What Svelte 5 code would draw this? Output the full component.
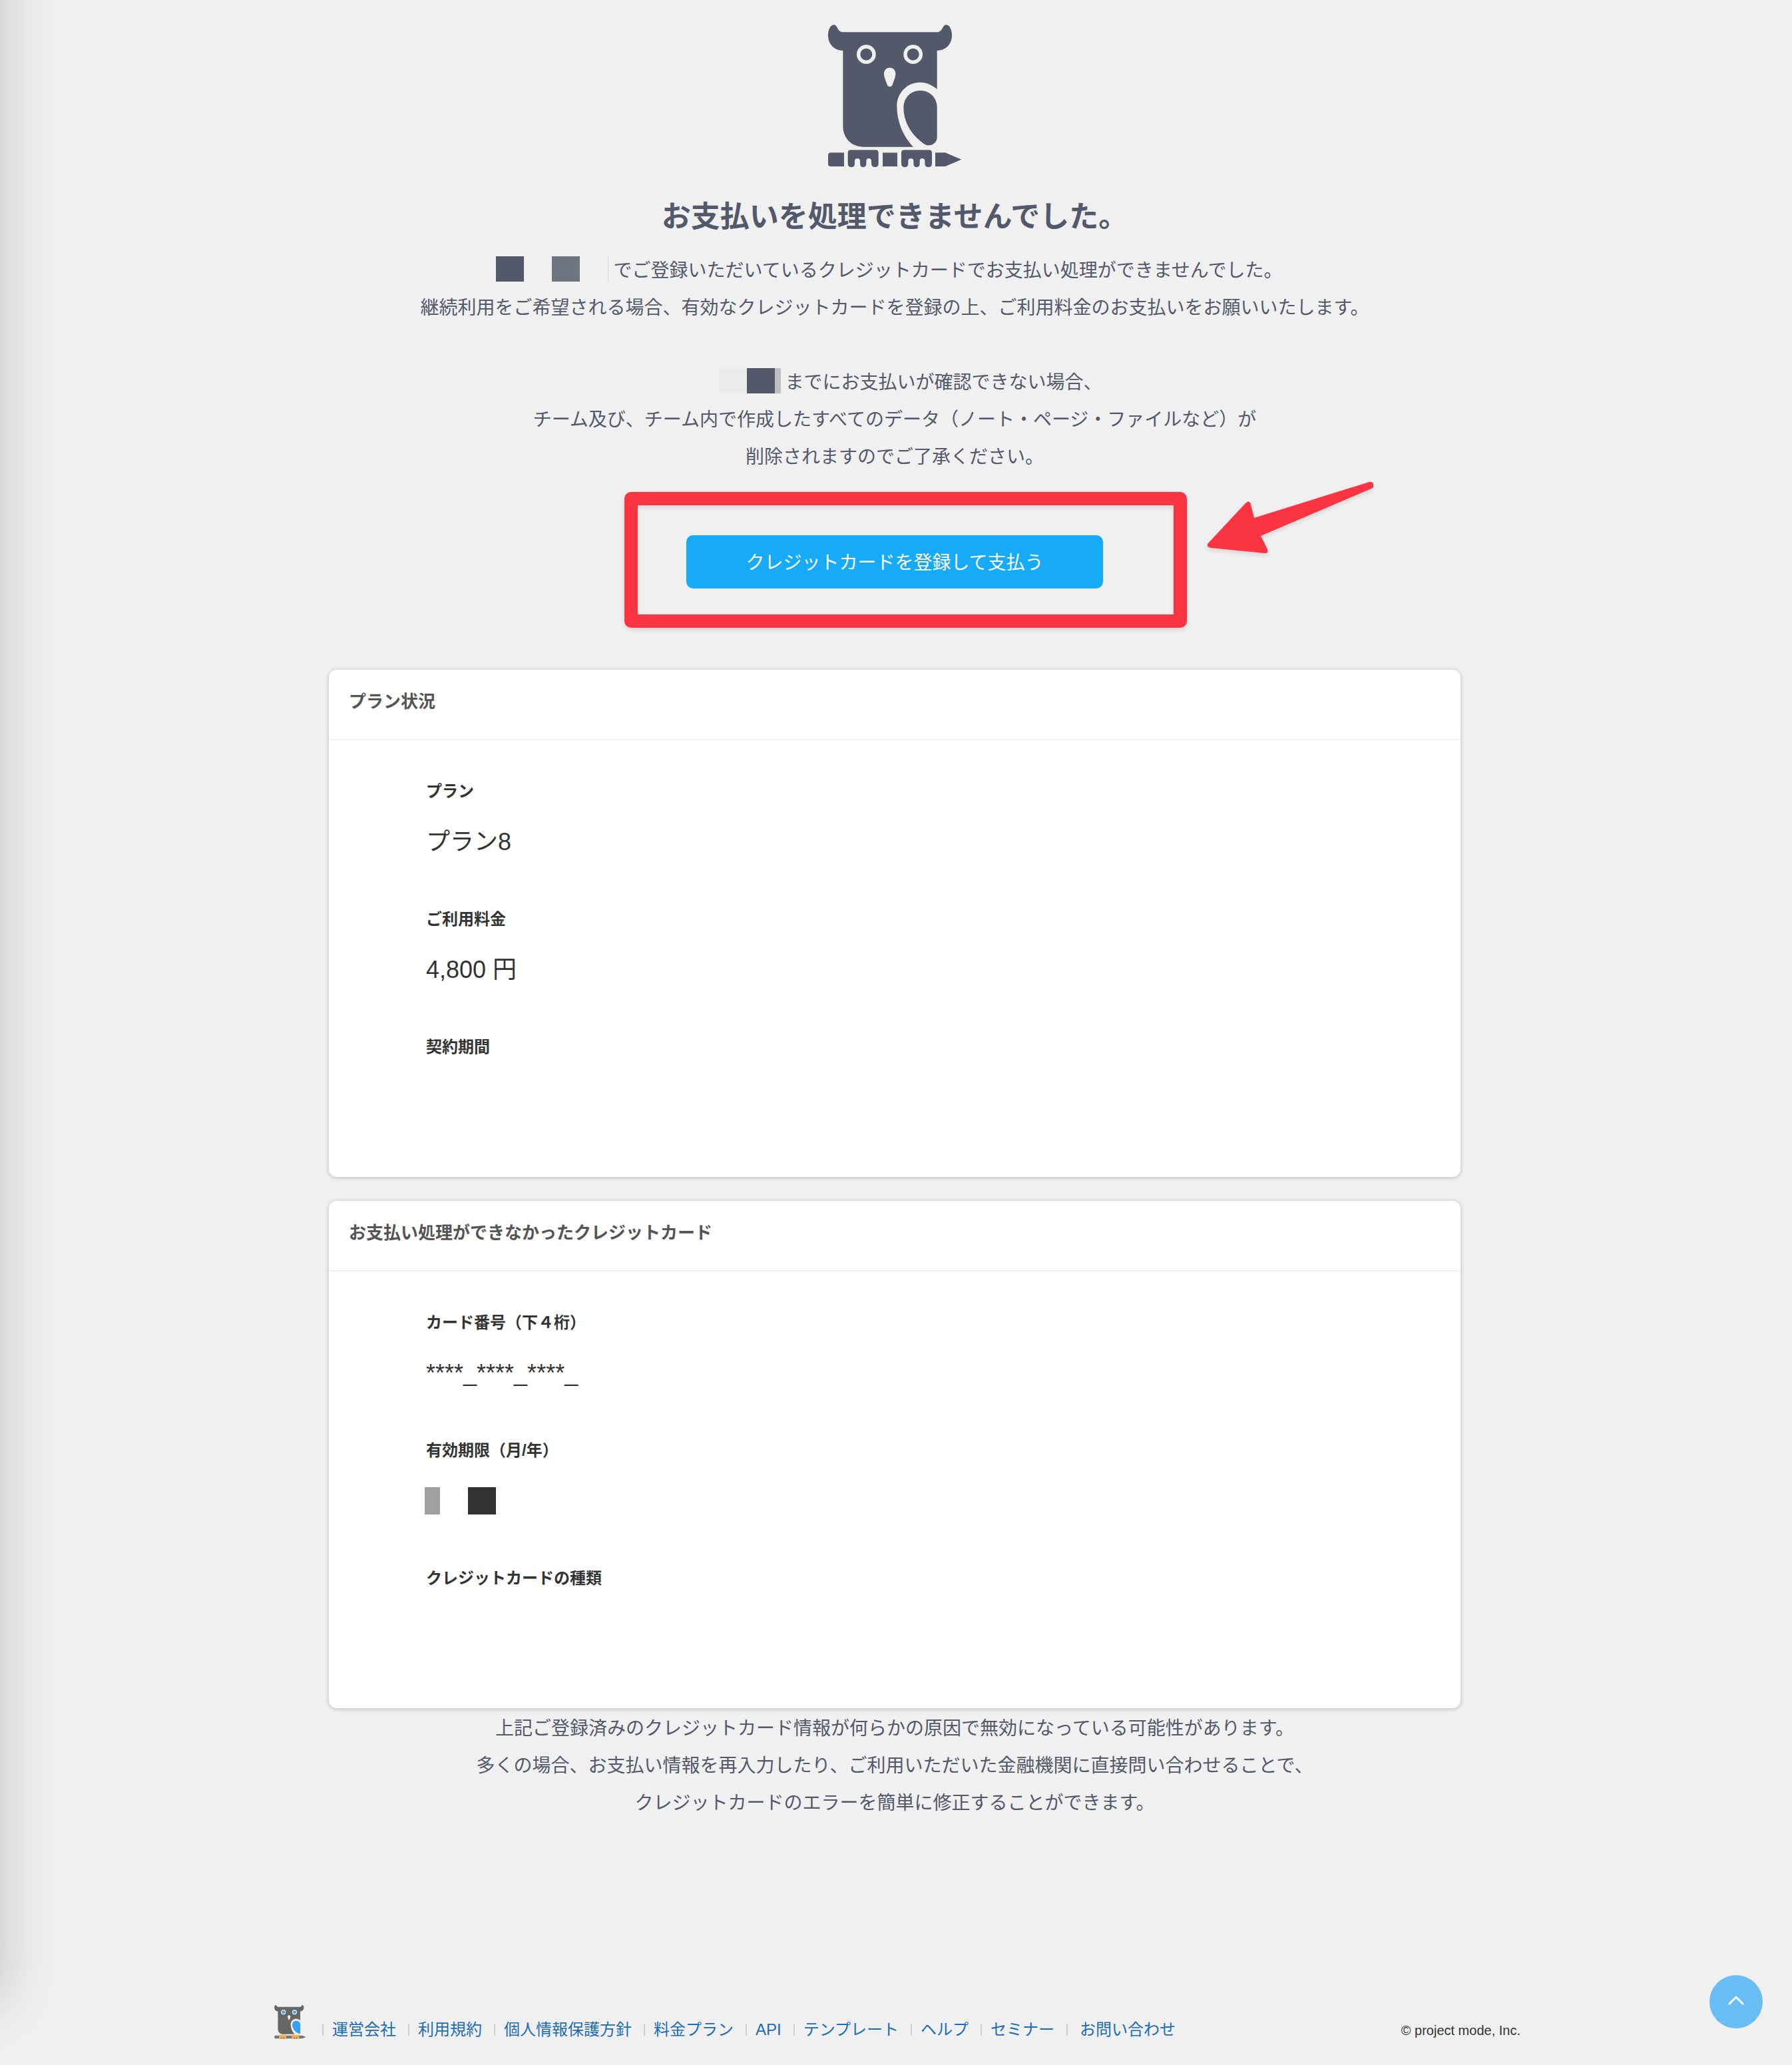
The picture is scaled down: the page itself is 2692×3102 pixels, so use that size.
<script lang="ts">

	type Item = { label : string, value? : string, masked? : boolean };
	type Card = { title : string, items : Item[] };

	const cards : Card[] = [
		{
			title : 'プラン状況',
			items : [
				{ label : 'プラン', value : 'プラン8' },
				{ label : 'ご利用料金', value : '4,800 円' },
				{ label : '契約期間' }
			]
		},
		{
			title : 'お支払い処理ができなかったクレジットカード',
			items : [
				{ label : 'カード番号（下４桁）', value : '****_****_****_' },
				{ label : '有効期限（月/年）', masked : true },
				{ label : 'クレジットカードの種類' }
			]
		}
	];

	const links = [
		'運営会社',
		'利用規約',
		'個人情報保護方針',
		'料金プラン',
		'API',
		'テンプレート',
		'ヘルプ',
		'セミナー',
		'お問い合わせ'
	];

	function toTop () {
		window.scrollTo({ top : 0, behavior : 'smooth' });
	}

</script>

<div class="page">
	<div class="side-shadow"></div>

	<main>
		<svg class="logo" viewBox="132 50 600 642" role="img" aria-label="ロゴ">
			<g fill="#53596b">
				<path d="M132 99C132 78 140 51 158 51C176 51 172 84 200 84H622C650 84 646 51 664 51C682 51 690 78 690 99C690 138 662 167 623 167V341C600 321 575 310 547 310C488 310 442 358 442 416C442 490 472 554 516 601H292C238 601 199 562 199 508V167C160 167 132 138 132 99Z" />
				<path d="M547 347C590 347 623 380 623 423V557C623 578 606 594 586 594C576 594 570 591 562 586C506 546 472 488 472 423C472 380 505 347 547 347Z" />
				<path d="M144 627H204V689H144Q132 689 132 677V639Q132 627 144 627Z" />
				<path id="foot" d="M234 615H346Q359 615 359 628V678Q359 692 343 692Q327 692 327 676V664Q327 653 315 653Q304 653 304 664V677Q304 692 290 692Q276 692 276 677V664Q276 653 264 653Q252 653 252 664V677Q252 692 237 692Q221 692 221 677V628Q221 615 234 615Z" />
				<path d="M378 627H444V689H378Z" />
				<use href="#foot" x="241" />
				<path d="M615 627H660L733 658L660 689H615Z" />
			</g>
			<g fill="none" stroke="#f0f0f0" stroke-width="16">
				<circle cx="304" cy="184" r="35" />
				<circle cx="515" cy="184" r="35" />
			</g>
			<path fill="#f0f0f0" d="M410 244C427 244 438 258 436 276C434 292 427 306 422 321Q419 330 410 330Q401 330 398 321C393 306 386 292 384 276C382 258 393 244 410 244Z" />
		</svg>

		<h1>お支払いを処理できませんでした。</h1>

		<p>
			<span class="mask service"><i class="dark"></i><i></i><i class="slate"></i><i></i><i class="edge"></i></span>でご登録いただいているクレジットカードでお支払い処理ができませんでした。<br>
			継続利用をご希望される場合、有効なクレジットカードを登録の上、ご利用料金のお支払いをお願いいたします。<br>
			<br>
			<span class="mask date"><i></i><i class="pale"></i><i class="dark"></i><i class="edge"></i></span>までにお支払いが確認できない場合、<br>
			チーム及び、チーム内で作成したすべてのデータ（ノート・ページ・ファイルなど）が<br>
			削除されますのでご了承ください。
		</p>

		<div class="pay">
			<button class="pay-button">クレジットカードを登録して支払う</button>
			<div class="frame"></div>
			<svg class="arrow" viewBox="0 0 260 120" aria-hidden="true">
				<path d="M4 95L60 35Q66 29 68 37L73 57L246 3Q251 2 252 7Q253 12 249 13L83 84L93 104Q95 110 89 110L8 102Q0 100 4 95Z" />
			</svg>
		</div>

		<div class="cards">
			{#each cards as card}
				<section class="card">
					<h2>{card.title}</h2>
					<dl>
						{#each card.items as item}
							<div>
								<dt>{item.label}</dt>
								<dd>
									{#if item.masked}
										<span class="mask expiry"><i class="grey"></i><i></i><i class="black"></i></span>
									{:else}
										{item.value ?? ''}
									{/if}
								</dd>
							</div>
						{/each}
					</dl>
				</section>
			{/each}
		</div>

		<p class="note">
			上記ご登録済みのクレジットカード情報が何らかの原因で無効になっている可能性があります。<br>
			多くの場合、お支払い情報を再入力したり、ご利用いただいた金融機関に直接問い合わせることで、<br>
			クレジットカードのエラーを簡単に修正することができます。
		</p>
	</main>

	<footer>
		<svg class="owl" viewBox="132 50 602 644" role="img" aria-label="ロゴ">
			<path fill="#666" d="M132 99C132 78 140 51 158 51C176 51 172 84 200 84H622C650 84 646 51 664 51C682 51 690 78 690 99C690 138 662 167 623 167V341C600 321 575 310 547 310C488 310 442 358 442 416C442 490 472 554 516 601H292C238 601 199 562 199 508V167C160 167 132 138 132 99Z" />
			<path fill="#34a0f8" d="M547 347C590 347 623 380 623 423V594C540 590 472 500 472 423C472 380 505 347 547 347Z" />
			<path fill="#777" d="M152 627H660L733 655L660 683H152Q132 683 132 655Q132 627 152 627Z" />
			<path fill="#f5b04c" d="M234 615H346Q359 615 359 627V692H221V627Q221 615 234 615ZM475 615H587Q600 615 600 627V692H462V627Q462 615 475 615Z" />
			<path stroke="#777" stroke-width="14" d="M268 692V655M312 692V655M509 692V655M553 692V655" />
			<g fill="#34a0f8" stroke="#f0f0f0" stroke-width="16">
				<circle cx="304" cy="184" r="38" />
				<circle cx="515" cy="184" r="38" />
			</g>
			<path fill="#f0f0f0" d="M410 244C427 244 438 258 436 276L422 321Q410 338 398 321L384 276C382 258 393 244 410 244Z" />
		</svg>
		<ul>
			{#each links as link}
				<li><a href="#top">{link}</a></li>
			{/each}
		</ul>
		<small>© project mode, Inc.</small>
	</footer>

	<button class="to-top" aria-label="ページの先頭へ" on:click={toTop}>
		<svg viewBox="0 0 24 14" aria-hidden="true">
			<path d="M2 12L12 2L22 12" />
		</svg>
	</button>
</div>

<style>

	:global(body) {
		background-color: #f0f0f0;
	}

	.page {
		position: relative;
		overflow: hidden;
		padding: 37px 4px 0 0;
		font-family: "Liberation Sans", "Noto Sans CJK JP", sans-serif;
		color: #333;
		background-color: #f0f0f0;
	}

	.side-shadow {
		position: absolute;
		top: -100px;
		bottom: 94px;
		left: -400px;
		width: 400px;
		box-shadow: 0 0 80px rgba(0, 0, 0, .2);
	}

	main {
		display: flex;
		flex-direction: column;
		align-items: center;
		max-width: 1700px;
		margin: 0 auto;
	}

	.logo {
		width: 200px;
		height: 214px;
	}

	h1 {
		margin: 45px 0 23px;
		font-size: 44px;
		font-weight: 700;
		line-height: 60px;
		color: #53596b;
	}

	p {
		margin: 0;
		font-size: 28px;
		line-height: 56px;
		text-align: center;
		color: #53596b;
	}

	.note {
		margin-top: 3px;
	}

	.mask {
		display: inline-flex;
		height: 38px;
		vertical-align: -7px;
	}

	.mask i {
		width: 42px;
	}

	.mask .edge {
		width: 9px;
		border-left: 1px solid #d4d5d8;
		box-sizing: border-box;
	}

	.mask .dark {
		background-color: #53596b;
	}

	.mask .slate {
		background-color: #6f7580;
	}

	.mask .pale {
		background-color: #ebebeb;
	}

	.mask .grey {
		width: 23px;
		background-color: #a0a0a0;
	}

	.mask .black {
		background-color: #333;
	}

	/* the mask reaches a little over the start of the line */
	.service {
		margin-left: -17px;
	}

	.date {
		padding-left: 6px;
		margin-right: 6px;
	}

	.date .edge {
		border-left: 9px solid #bfc0c6;
	}

	.expiry {
		height: 41px;
		margin: 0 0 2px -2px;
	}

	.pay {
		position: relative;
		width: 626px;
		margin: 89px 0 122px;
	}

	.pay-button {
		display: block;
		width: 100%;
		height: 80px;
		padding: 0 0 3px;
		font-family: inherit;
		font-size: 28px;
		color: #fff;
		background-color: #17aaf7;
		border: none;
		border-radius: 10px;
		cursor: pointer;
	}

	.frame {
		position: absolute;
		top: -65px;
		right: -126px;
		bottom: -59px;
		left: -93px;
		border: 20px solid #fb3442;
		border-radius: 10px;
		filter: drop-shadow(0 3px 3px rgba(0, 0, 0, .12));
		pointer-events: none;
	}

	.arrow {
		position: absolute;
		top: -83px;
		left: 780px;
		width: 260px;
		height: 120px;
		fill: #fb3442;
		filter: drop-shadow(0 3px 3px rgba(0, 0, 0, .12));
		pointer-events: none;
	}

	.cards {
		display: grid;
		gap: 36px;
		align-self: stretch;
	}

	.card {
		background-color: #fff;
		border-radius: 12px;
		box-shadow: 0 1px 6px rgba(0, 0, 0, .24);
	}

	h2 {
		margin: 0;
		padding: 30px 30px 38px;
		font-size: 26px;
		font-weight: 700;
		line-height: 36px;
		color: #555;
		border-bottom: 2px solid #f3f3f3;
	}

	dl {
		display: grid;
		gap: 72px;
		margin: 0;
		padding: 59px 146px 93px;
	}

	dt {
		margin-bottom: 32px;
		font-size: 24px;
		font-weight: 700;
		line-height: 36px;
	}

	dd {
		display: flex;
		align-items: center;
		height: 52px;
		margin: 0;
		font-size: 36px;
		line-height: 52px;
	}

	footer {
		display: flex;
		align-items: flex-end;
		max-width: 1880px;
		margin: 275px auto 0;
		padding-bottom: 36px;
		box-sizing: border-box;
	}

	.owl {
		width: 48px;
		height: 51px;
		margin: 0 24px 2px 8px;
	}

	ul {
		display: flex;
		margin: 0;
		padding: 0;
		list-style: none;
	}

	li {
		display: flex;
		align-items: center;
		padding-right: 18px;
		font-size: 24px;
		line-height: 32px;
	}

	li::before {
		content: "";
		width: 2px;
		height: 18px;
		margin-right: 13px;
		background-color: #cfcfcf;
	}

	li:last-child::before {
		margin-right: 18px;
	}

	a {
		color: #1b6cb8;
		text-decoration: none;
	}

	small {
		margin-left: auto;
		font-size: 20px;
		line-height: 30px;
	}

	.to-top {
		position: absolute;
		right: 44px;
		bottom: 54px;
		display: grid;
		place-items: center;
		width: 80px;
		height: 80px;
		padding: 0 0 4px;
		background-color: #69bef5;
		border: none;
		border-radius: 50%;
		cursor: pointer;
	}

	.to-top svg {
		width: 24px;
		height: 14px;
		fill: none;
		stroke: #fff;
		stroke-width: 3;
		stroke-linecap: round;
		stroke-linejoin: round;
	}

</style>
